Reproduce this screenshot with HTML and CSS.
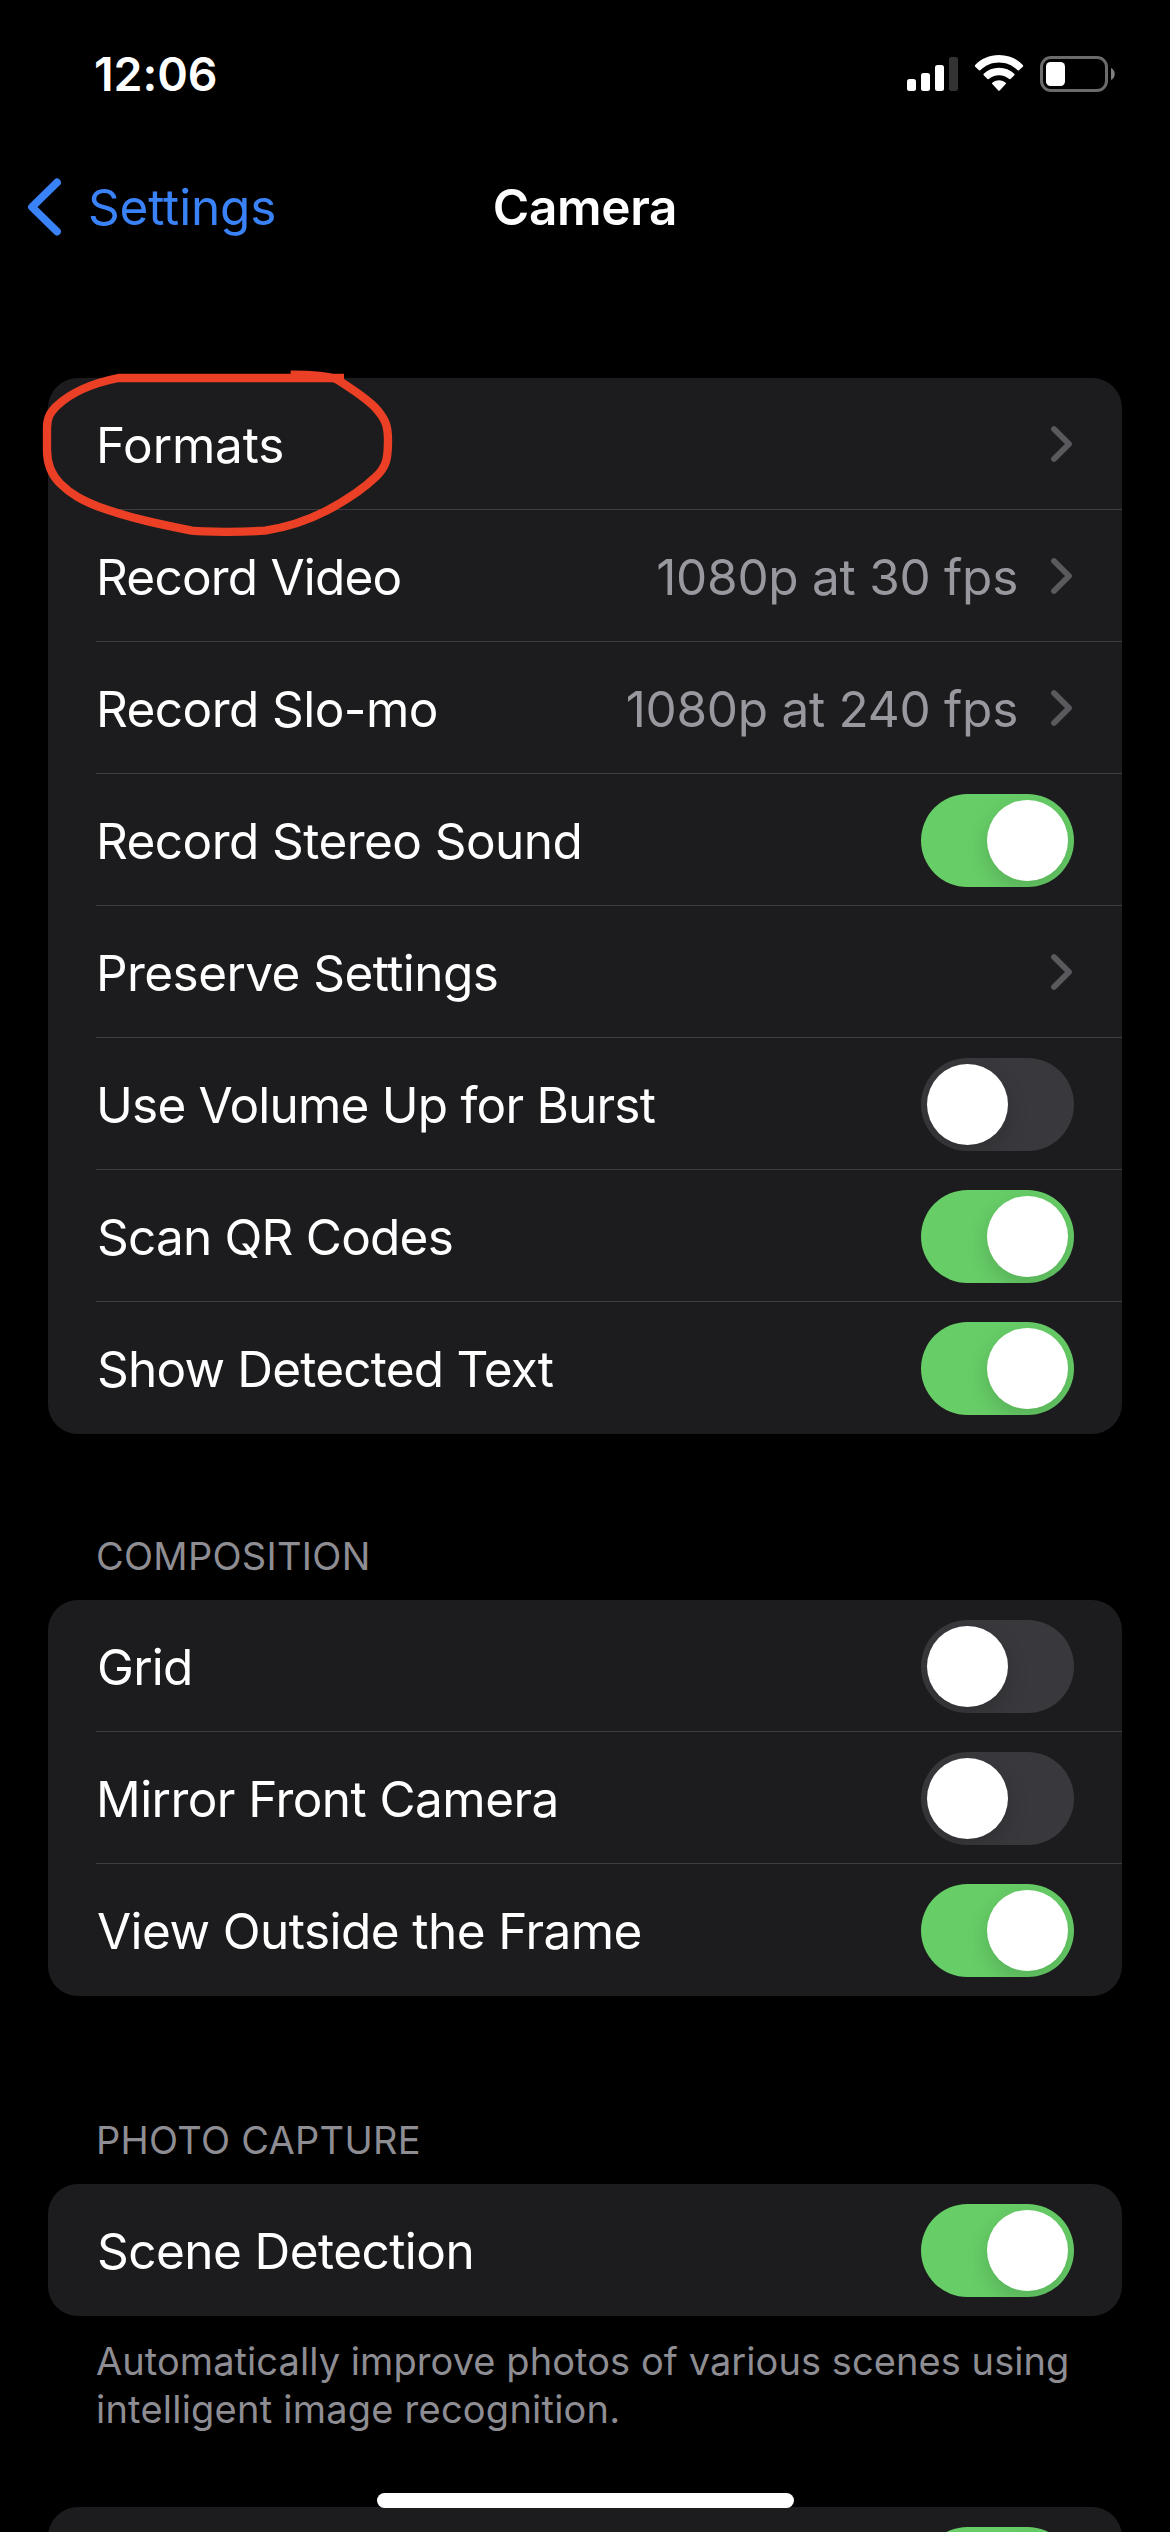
FILE: index.html
```html
<!DOCTYPE html>
<html lang="en">
<head>
<meta charset="utf-8">
<title>Camera</title>
<link rel="stylesheet" href="styles.css">
</head>
<body>
<svg class="symbols" width="0" height="0">
  <symbol id="chevron" viewBox="0 0 24 38"><path d="M4 4 L19 19 L4 34"/></symbol>
</svg>
<div class="screen">
  <header class="status">
    <span class="time">12:06</span>
    <div class="indicators">
      <svg class="signal" width="51" height="36" viewBox="0 0 51 36">
        <rect x="0" y="22" width="9" height="12" rx="2.5"/>
        <rect x="14" y="16" width="9" height="18" rx="2.5"/>
        <rect x="28" y="8" width="9" height="26" rx="2.5"/>
        <rect class="dim" x="42" y="0" width="9" height="34" rx="2.5"/>
      </svg>
      <svg class="wifi" width="50" height="36" viewBox="0 0 50 36">
        <path d="M25 0 C34.500 0 43 3.800 48.800 10 Q49.500 11 48.800 11.800 L45 15.300 Q44.500 15.900 43.700 15.200 C38.500 10.200 32 7.500 25 7.500 C18 7.500 11.500 10.200 6.300 15.200 Q5.500 15.900 5 15.300 L1.200 11.800 Q0.500 11 1.200 10 C7 3.800 15.500 0 25 0 Z"/>
        <path d="M25 12.800 C31 12.800 36.300 15 40.300 18.800 Q40.900 19.500 40.300 20.300 L36.500 24 Q35.900 24.500 35.200 24 C32.400 21.500 28.900 20.200 25 20.200 C21.100 20.200 17.600 21.500 14.800 24 Q14.100 24.500 13.500 24 L9.700 20.300 Q9.100 19.500 9.700 18.800 C13.700 15 19 12.800 25 12.800 Z"/>
        <path d="M25 25.300 C27.500 25.300 29.900 26.200 31.700 27.700 Q32.400 28.400 31.700 29.100 L25.700 35.400 Q25 36 24.300 35.400 L18.300 29.100 Q17.600 28.400 18.300 27.700 C20.100 26.200 22.500 25.300 25 25.300 Z"/>
      </svg>
      <svg class="battery" width="76" height="36" viewBox="0 0 76 36">
        <rect class="shell" x="2.500" y="1.500" width="65" height="33" rx="9.500"/>
        <path class="nub" d="M72 12 C77 14 77 22 72 24 Z"/>
        <rect x="7" y="6" width="19" height="24" rx="4.500"/>
      </svg>
    </div>
  </header>

  <nav class="navbar">
    <a class="back">
      <svg width="34" height="58" viewBox="0 0 34 58"><path d="M30 4.500 L5 29 L30 53.500"/></svg>
      <span>Settings</span>
    </a>
    <h1>Camera</h1>
  </nav>

  <main>
    <section class="card">
      <div class="row"><span class="label formats">Formats</span><svg class="chev"><use href="#chevron"/></svg></div>
      <div class="row"><span class="label tight">Record Video</span><span class="value">1080p at 30 fps</span><svg class="chev"><use href="#chevron"/></svg></div>
      <div class="row"><span class="label">Record Slo-mo</span><span class="value">1080p at 240 fps</span><svg class="chev"><use href="#chevron"/></svg></div>
      <div class="row"><span class="label">Record Stereo Sound</span><span class="toggle on"></span></div>
      <div class="row"><span class="label">Preserve Settings</span><svg class="chev"><use href="#chevron"/></svg></div>
      <div class="row"><span class="label tight">Use Volume Up for Burst</span><span class="toggle"></span></div>
      <div class="row"><span class="label tight round">Scan QR Codes</span><span class="toggle on"></span></div>
      <div class="row"><span class="label tight round">Show Detected Text</span><span class="toggle on"></span></div>
      <svg class="scribble" width="400" height="200" viewBox="0 0 1200 600">
        <path d="M972 84 H295 C215 100 150 130 110 168 C88 190 81 205 81 235 V300 C81 345 95 375 120 400 C155 435 190 452 235 470 C330 505 430 525 515 542 C560 547 680 546 735 542 C800 532 870 508 920 482 C980 450 1035 412 1070 378 C1100 348 1104 325 1104 270 C1104 225 1095 205 1065 172 C1030 138 985 110 950 88 C920 76 870 74 812 74"/>
      </svg>
    </section>

    <h2>COMPOSITION</h2>
    <section class="card">
      <div class="row"><span class="label tight round">Grid</span><span class="toggle"></span></div>
      <div class="row"><span class="label">Mirror Front Camera</span><span class="toggle"></span></div>
      <div class="row"><span class="label round">View Outside the Frame</span><span class="toggle on"></span></div>
    </section>

    <h2 class="photo">PHOTO CAPTURE</h2>
    <section class="card">
      <div class="row"><span class="label round">Scene Detection</span><span class="toggle on"></span></div>
    </section>
    <p class="note">Automatically improve photos of various scenes using<br><span class="last">intelligent image recognition.</span></p>
    <section class="card">
      <div class="row"><span class="toggle on"></span></div>
    </section>
  </main>
  <div class="home"></div>
</div>
</body>
</html>
```
FILE: styles.css
```css
* { box-sizing: border-box; }
body { margin: 0; background: #000; color: #fff; font-family: Inter, "Liberation Sans", sans-serif; }
.symbols { display: block; position: absolute; }
.screen { position: relative; width: 1170px; height: 2532px; overflow: hidden; background: #000; }

.status { display: flex; justify-content: space-between; align-items: flex-start; height: 141px; padding: 46px 55px 0 94px; }
.time { font-size: 46.5px; line-height: 56px; font-weight: 600; letter-spacing: -0.1px; }
.indicators { display: flex; padding-top: 9px; fill: #fff; }
.signal { margin: 2px 16px 0 0; }
.wifi { margin-right: 15px; }
.battery { margin-top: 1px; }
.dim { fill: #333; }
.shell { fill: none; stroke: #6b6b6b; stroke-width: 3; }
.nub { fill: #7f7f7f; }

.navbar { display: grid; grid-template-columns: 1fr auto 1fr; align-items: center; height: 132px; padding: 0 27px; }
.back { display: flex; align-items: center; gap: 27px; color: #3a82f7; font-size: 49.5px; line-height: 60px; letter-spacing: -0.16px; }
.back svg { fill: none; stroke: #3a82f7; stroke-width: 7.8; stroke-linecap: round; stroke-linejoin: round; }
h1 { margin: 0; font-size: 49.5px; line-height: 60px; font-weight: 600; letter-spacing: -0.33px; }

main { padding: 105px 48px 0; }
.card { position: relative; background: #1c1c1e; border-radius: 30px; }
.row { position: relative; display: flex; align-items: center; height: 132px; padding: 0 48px; }
.row + .row::before { content: ""; position: absolute; left: 48px; right: 0; top: -1px; height: 1px; background: #3d3d41; }
.label { flex: 1; padding-top: 2px; font-size: 49.5px; line-height: 60px; letter-spacing: -0.56px; white-space: nowrap; }
.label.tight { letter-spacing: -0.79px; }
.label.round { padding-left: 1px; }
.label.formats { letter-spacing: -0.15px; }
.value { padding-top: 2px; font-size: 49.5px; line-height: 60px; letter-spacing: -0.27px; color: #98989f; margin-right: 32px; white-space: nowrap; }
.chev { width: 24px; height: 38px; fill: none; stroke: #5a5a5e; stroke-width: 5.8; stroke-linecap: round; stroke-linejoin: round; }
.toggle { width: 153px; height: 93px; margin: 1px 0 0 auto; padding: 6px; border-radius: 47px; background: #39393d; overflow: hidden; }
.toggle::after { content: ""; display: block; width: 81px; height: 81px; border-radius: 50%; background: #fff; box-shadow: 0 8px 22px rgba(0,0,0,.16); }
.toggle.on { background: #67ce67; }
.toggle.on::after { margin-left: 60px; }

/* hand-drawn marker ring over the first row */
.scribble { position: absolute; left: -28px; top: -28px; fill: none; stroke: #eb4025; stroke-width: 25; stroke-linejoin: round; }

h2 { margin: 0; padding: 98px 48px 0; height: 166px; font-size: 38px; line-height: 48px; font-weight: 400; letter-spacing: 0.28px; color: #8d8d93; }
h2.photo { height: 188px; padding-top: 120px; }
.note { margin: 0; height: 191px; padding: 21px 48px 0; font-size: 38px; line-height: 48px; letter-spacing: 0.07px; color: #8d8d93; white-space: nowrap; }
.last { letter-spacing: 0.23px; }
.home { position: absolute; left: 377px; top: 2493px; width: 417px; height: 15px; border-radius: 8px; background: #fff; }
```
